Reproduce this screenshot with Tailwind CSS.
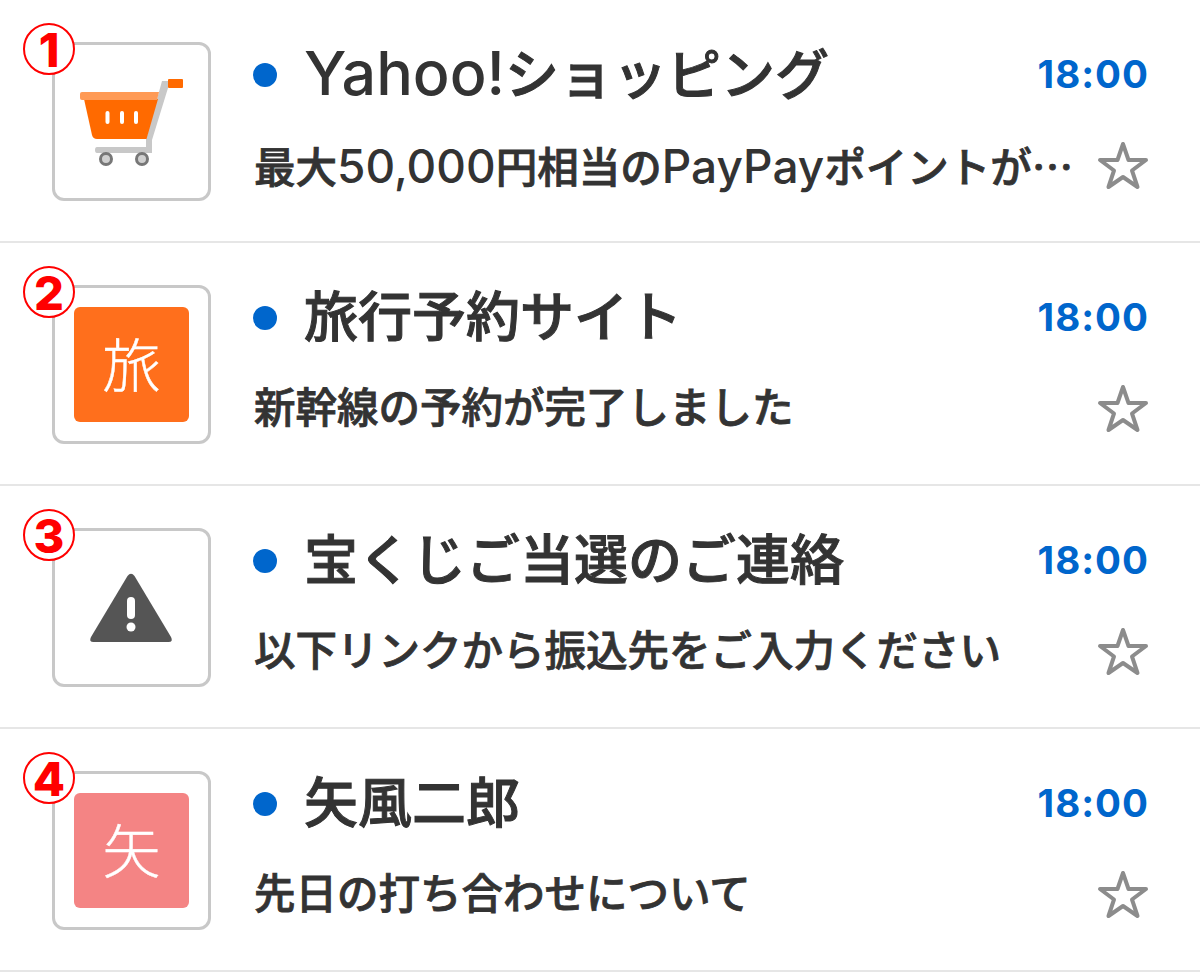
<!DOCTYPE html>
<html lang="ja">
<head>
    <meta charset="UTF-8">
    <meta name="viewport" content="width=device-width, initial-scale=1.0">
    <title>メール一覧</title>
    <script src="https://cdn.jsdelivr.net/npm/@tailwindcss/browser@4"></script>
</head>
<body class="bg-white font-['Inter','Noto_Sans_CJK_JP',sans-serif] text-[#333333]">
    <ul class="w-[1200px]">
        <!-- 1 -->
        <li class="flex h-[243px] pl-[52px] pt-[42px] pr-[52px] border-b-2 border-[#e6e6e6]">
            <div class="relative w-[159px] h-[159px] shrink-0 border-[3px] border-[#c8c8c8] rounded-xl">
                <svg class="absolute left-[-3px] top-[-3px]" width="159" height="159" viewBox="52 42 159 159">
                    <path d="M162 81 L168 81 L168 88 L152 140 L152 153 L97 153 Q95 153 95 150 Q95 147 97 147 L146 147 L146 139 Z" fill="#c8c8c8"/>
                    <rect x="168" y="79" width="15" height="9" rx="1" fill="#ff6a00"/>
                    <path d="M84 99 L158 99 L146.500 139 L97 139 Q93 139 92 135 Z" fill="#ff6a00"/>
                    <path d="M82 92 L159 92 L157 100 L82 100 Q80 100 80 98 L80 94 Q80 92 82 92 Z" fill="#ff9a55"/>
                    <rect x="105.500" y="111" width="4" height="13" rx="2" fill="#fff"/>
                    <rect x="120" y="111" width="4" height="13" rx="2" fill="#fff"/>
                    <rect x="134" y="111" width="4" height="13" rx="2" fill="#fff"/>
                    <circle cx="106" cy="159" r="5.500" fill="#d0d0d0" stroke="#777" stroke-width="3"/>
                    <circle cx="142" cy="159" r="5.500" fill="#d0d0d0" stroke="#777" stroke-width="3"/>
                </svg>
                <span class="absolute left-[-32px] top-[-22px] w-[52px] h-[52px] rounded-full bg-white border-2 border-[#ff0000] flex items-center justify-center text-[#ff0000] text-[47px] font-extrabold leading-none">1</span>
            </div>
            <div class="flex-1 ml-[42px] min-w-0">
                <div class="flex items-center h-[66px]">
                    <span class="w-6 h-6 rounded-full bg-[#0066cc] shrink-0"></span>
                    <span class="ml-[27px] pb-[4px] text-[54px] font-medium leading-none whitespace-nowrap [-webkit-text-stroke:1px_#333333]"><span class="text-[61px] [-webkit-text-stroke:0]">Yahoo!</span>ショッピング</span>
                    <span class="ml-auto mr-[-1px] pb-[2px] text-[38.5px] font-bold tracking-[1px] text-[#0066cc] leading-none">18:00</span>
                </div>
                <div class="flex items-center justify-between mt-[33px] h-[50px]">
                    <span class="pl-[1px] text-[41.5px] font-medium leading-none whitespace-nowrap [-webkit-text-stroke:0.8px_#333333]">最大<span class="text-[46px] [-webkit-text-stroke:0]">50,000</span>円相当の<span class="text-[46px] [-webkit-text-stroke:0]">PayPay</span>ポイントが<span class="font-['Noto_Sans_CJK_JP']">…</span></span>
                    <svg class="shrink-0" width="52" height="52" viewBox="0 0 52 52"><path d="M27 4 L32.500 20 L50 20 L36 30.500 L41.500 47 L27 37 L12.500 47 L18 30.500 L4 20 L21.500 20 Z" fill="none" stroke="#8c8c8c" stroke-width="4" stroke-linejoin="round"/></svg>
                </div>
            </div>
        </li>
        <!-- 2 -->
        <li class="flex h-[243px] pl-[52px] pt-[42px] pr-[52px] border-b-2 border-[#e6e6e6]">
            <div class="relative w-[159px] h-[159px] shrink-0 border-[3px] border-[#c8c8c8] rounded-xl flex items-center justify-center">
                <div class="w-[115px] h-[115px] pt-[4px] rounded-md bg-[#ff6f1c] text-white text-[58px] font-light [-webkit-text-stroke:0.4px_#ffffff] flex items-center justify-center">旅</div>
                <span class="absolute left-[-32px] top-[-22px] w-[52px] h-[52px] rounded-full bg-white border-2 border-[#ff0000] flex items-center justify-center text-[#ff0000] text-[47px] font-extrabold leading-none">2</span>
            </div>
            <div class="flex-1 ml-[42px] min-w-0">
                <div class="flex items-center h-[66px]">
                    <span class="w-6 h-6 rounded-full bg-[#0066cc] shrink-0"></span>
                    <span class="ml-[27px] text-[54px] font-medium leading-none whitespace-nowrap [-webkit-text-stroke:1px_#333333]">旅行予約サイト</span>
                    <span class="ml-auto mr-[-1px] pb-[2px] text-[38.5px] font-bold tracking-[1px] text-[#0066cc] leading-none">18:00</span>
                </div>
                <div class="flex items-center justify-between mt-[33px] h-[50px]">
                    <span class="pl-[1px] text-[41.5px] font-medium leading-none whitespace-nowrap [-webkit-text-stroke:0.8px_#333333]">新幹線の予約が完了しました</span>
                    <svg class="shrink-0" width="52" height="52" viewBox="0 0 52 52"><path d="M27 4 L32.500 20 L50 20 L36 30.500 L41.500 47 L27 37 L12.500 47 L18 30.500 L4 20 L21.500 20 Z" fill="none" stroke="#8c8c8c" stroke-width="4" stroke-linejoin="round"/></svg>
                </div>
            </div>
        </li>
        <!-- 3 -->
        <li class="flex h-[243px] pl-[52px] pt-[42px] pr-[52px] border-b-2 border-[#e6e6e6]">
            <div class="relative w-[159px] h-[159px] shrink-0 border-[3px] border-[#c8c8c8] rounded-xl">
                <svg class="absolute left-[-3px] top-[-3px]" width="159" height="159" viewBox="52 528 159 159">
                    <path d="M127.500 576 Q131 571.500 134.500 576 L171 637 Q173.500 642 168.500 642 L93.500 642 Q88.500 642 91 637 Z" fill="#555555"/>
                    <rect x="127" y="597" width="8" height="22" rx="4" fill="#fff"/>
                    <circle cx="131" cy="627" r="4.500" fill="#fff"/>
                </svg>
                <span class="absolute left-[-32px] top-[-22px] w-[52px] h-[52px] rounded-full bg-white border-2 border-[#ff0000] flex items-center justify-center text-[#ff0000] text-[47px] font-extrabold leading-none">3</span>
            </div>
            <div class="flex-1 ml-[42px] min-w-0">
                <div class="flex items-center h-[66px]">
                    <span class="w-6 h-6 rounded-full bg-[#0066cc] shrink-0"></span>
                    <span class="ml-[27px] text-[54px] font-medium leading-none whitespace-nowrap [-webkit-text-stroke:1px_#333333]">宝くじご当選のご連絡</span>
                    <span class="ml-auto mr-[-1px] pb-[2px] text-[38.5px] font-bold tracking-[1px] text-[#0066cc] leading-none">18:00</span>
                </div>
                <div class="flex items-center justify-between mt-[33px] h-[50px]">
                    <span class="pl-[1px] text-[41.5px] font-medium leading-none whitespace-nowrap [-webkit-text-stroke:0.8px_#333333]">以下リンクから振込先をご入力ください</span>
                    <svg class="shrink-0" width="52" height="52" viewBox="0 0 52 52"><path d="M27 4 L32.500 20 L50 20 L36 30.500 L41.500 47 L27 37 L12.500 47 L18 30.500 L4 20 L21.500 20 Z" fill="none" stroke="#8c8c8c" stroke-width="4" stroke-linejoin="round"/></svg>
                </div>
            </div>
        </li>
        <!-- 4 -->
        <li class="flex h-[243px] pl-[52px] pt-[42px] pr-[52px] border-b-2 border-[#e6e6e6]">
            <div class="relative w-[159px] h-[159px] shrink-0 border-[3px] border-[#c8c8c8] rounded-xl flex items-center justify-center">
                <div class="w-[115px] h-[115px] pt-[4px] rounded-md bg-[#f48484] text-white text-[58px] font-light [-webkit-text-stroke:0.4px_#ffffff] flex items-center justify-center">矢</div>
                <span class="absolute left-[-32px] top-[-22px] w-[52px] h-[52px] rounded-full bg-white border-2 border-[#ff0000] flex items-center justify-center text-[#ff0000] text-[47px] font-extrabold leading-none">4</span>
            </div>
            <div class="flex-1 ml-[42px] min-w-0">
                <div class="flex items-center h-[66px]">
                    <span class="w-6 h-6 rounded-full bg-[#0066cc] shrink-0"></span>
                    <span class="ml-[27px] text-[54px] font-medium leading-none whitespace-nowrap [-webkit-text-stroke:1px_#333333]">矢風二郎</span>
                    <span class="ml-auto mr-[-1px] pb-[2px] text-[38.5px] font-bold tracking-[1px] text-[#0066cc] leading-none">18:00</span>
                </div>
                <div class="flex items-center justify-between mt-[33px] h-[50px]">
                    <span class="pl-[1px] text-[41.5px] font-medium leading-none whitespace-nowrap [-webkit-text-stroke:0.8px_#333333]">先日の打ち合わせについて</span>
                    <svg class="shrink-0" width="52" height="52" viewBox="0 0 52 52"><path d="M27 4 L32.500 20 L50 20 L36 30.500 L41.500 47 L27 37 L12.500 47 L18 30.500 L4 20 L21.500 20 Z" fill="none" stroke="#8c8c8c" stroke-width="4" stroke-linejoin="round"/></svg>
                </div>
            </div>
        </li>
    </ul>
</body>
</html>
